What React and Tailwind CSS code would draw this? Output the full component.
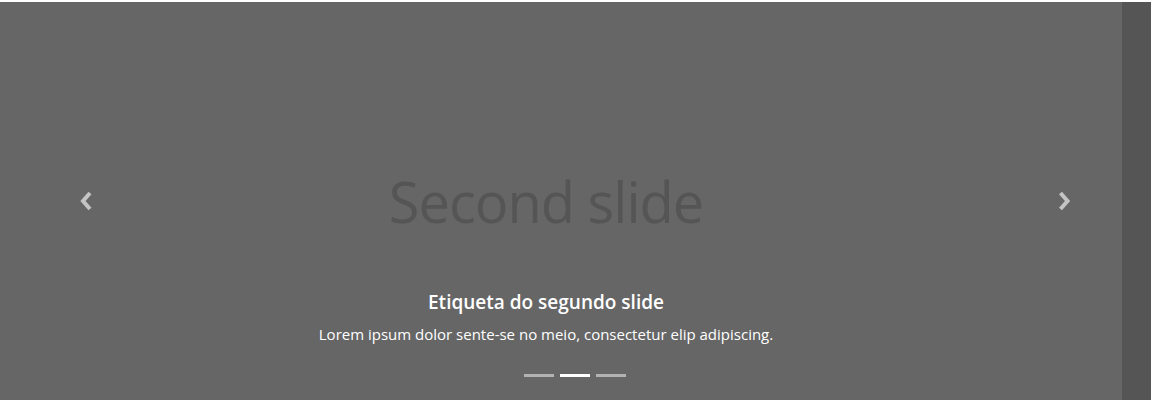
import React from 'react';

const Chevron = ({ dir }) => (
    <svg width="16" height="20" viewBox="0 0 16 20" fill="none">
        <polyline
            points={dir === 'left' ? '12,2 5,10 12,18' : '3.5,2 10.5,10 3.5,18'}
            stroke="#c4c4c4"
            strokeWidth="4"
            strokeLinecap="butt"
            strokeLinejoin="miter"
        />
    </svg>
);

const App = () => {
    return (
        <div className="w-[1153px] h-[400px] bg-white pt-[2px] pr-[2px] overflow-hidden" style={{ fontFamily: '"Open Sans", "Noto Sans", sans-serif' }}>
            <div className="relative h-[398px] bg-[#666666]">
                {/* Slide content */}
                <div className="flex flex-col items-center h-full pr-[59px]">
                    <div className="mt-[164px] text-[56px] leading-[70px] text-[#555555] tracking-[-1px]">Second slide</div>
                    <div className="mt-[53px] text-[19px] leading-[26px] font-semibold text-white">Etiqueta do segundo slide</div>
                    <div className="mt-[8px] text-[15px] leading-[22px] text-white">Lorem ipsum dolor sente-se no meio, consectetur elip adipiscing.</div>
                </div>

                {/* Controls */}
                <button className="absolute left-0 top-0 h-full w-[172px] flex items-center justify-center">
                    <Chevron dir="left" />
                </button>
                <button className="absolute right-0 top-0 h-full w-[172px] flex items-center justify-center">
                    <Chevron dir="right" />
                </button>

                {/* Indicators */}
                <div className="absolute left-0 right-[1px] bottom-[23px] flex justify-center gap-[6px]">
                    <span className="w-[30px] h-[3px] bg-[#b3b3b3]" />
                    <span className="w-[30px] h-[3px] bg-white" />
                    <span className="w-[30px] h-[3px] bg-[#b3b3b3]" />
                </div>

                {/* Scroll strip */}
                <div className="absolute right-0 top-0 h-full w-[29px] bg-[#555555]" />
            </div>
        </div>
    );
};

export default App;
